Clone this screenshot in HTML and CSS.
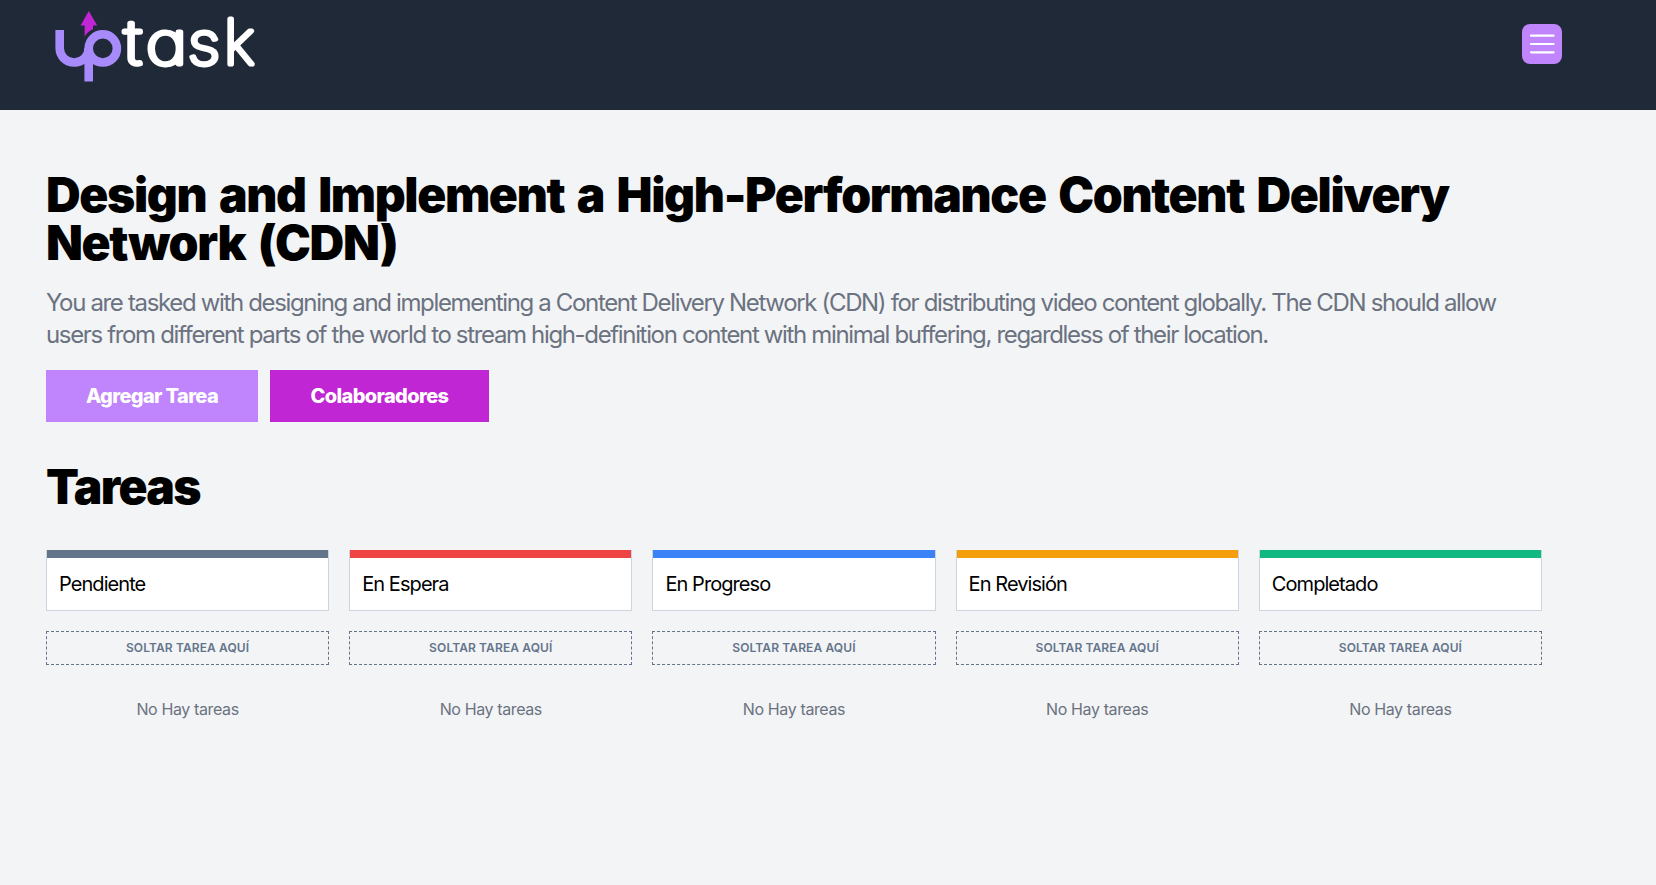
FILE: index.html
```html
<!DOCTYPE html>
<html lang="es">
<head>
<meta charset="utf-8">
<title>UpTask</title>
<link rel="stylesheet" href="styles.css">
</head>
<body>
<header class="header">
  <svg class="logo" width="210" height="90" viewBox="50 0 210 90" role="img" aria-label="uptask">
    <g fill="none" stroke="#a78bfa" stroke-width="8.6">
      <path d="M59.7 30V48.3A14.5 14.2 0 0 0 88.7 48.3"/>
      <circle cx="102.8" cy="48.4" r="14.1"/>
      <path d="M88.7 48V81.5"/>
    </g>
    <path fill="#c026d3" d="M88.8 11L97.2 25.500H93V29.200Q87.500 31.500 84.600 36.500V25.500H80.500Z"/>
    <g class="logo-text">
      <text transform="translate(124.200 64) scale(1.240 1.040)">t</text>
      <text transform="translate(146 64) scale(1.230 1)">a</text>
      <text transform="translate(187.800 64) scale(1.140 1)">s</text>
      <text transform="translate(224 64) scale(1.080 1.060)">k</text>
    </g>
  </svg>
  <button class="menu-button" aria-label="Menú">
    <svg width="32" height="32" viewBox="0 0 24 24" fill="none" stroke="#fff" stroke-width="1.6" stroke-linecap="round"><path d="M3.750 5.750h17M3.750 12h17M3.750 18.250h17"/></svg>
  </button>
</header>
<main class="main">
  <h1 class="title">Design and Implement a High-Performance Content Delivery Network (CDN)</h1>
  <p class="description">You are tasked with designing and implementing a Content Delivery Network (CDN) for distributing video content globally. The CDN should allow users from different parts of the world to stream high-definition content with minimal buffering, regardless of their location.</p>
  <nav class="actions">
    <a class="button button-add">Agregar Tarea</a>
    <a class="button button-team">Colaboradores</a>
  </nav>
  <h2 class="title section-title">Tareas</h2>
  <div class="board">
    <section class="column"><h3 class="status pending">Pendiente</h3><p class="drop">Soltar tarea aquí</p><p class="empty">No Hay tareas</p></section>
    <section class="column"><h3 class="status on-hold">En Espera</h3><p class="drop">Soltar tarea aquí</p><p class="empty">No Hay tareas</p></section>
    <section class="column"><h3 class="status in-progress">En Progreso</h3><p class="drop">Soltar tarea aquí</p><p class="empty">No Hay tareas</p></section>
    <section class="column"><h3 class="status under-review">En Revisión</h3><p class="drop">Soltar tarea aquí</p><p class="empty">No Hay tareas</p></section>
    <section class="column"><h3 class="status completed">Completado</h3><p class="drop">Soltar tarea aquí</p><p class="empty">No Hay tareas</p></section>
  </div>
</main>
</body>
</html>
```
FILE: styles.css
```css
* { box-sizing: border-box; margin: 0; padding: 0; }
body { min-height: 100vh; background: #f3f4f6; color: #000; font-family: Inter, "Liberation Sans", sans-serif; font-size: 16px; line-height: 24px; }
.header { display: flex; justify-content: space-between; align-items: flex-start; height: 110px; padding: 0 94px 0 50px; background: #1f2937; }
.logo { display: block; }
.logo-text { font-family: Inter, sans-serif; font-size: 57.5px; font-weight: 100; font-feature-settings: "cv11"; fill: #fff; stroke: #fff; stroke-width: 4.8px; stroke-linejoin: round; stroke-linecap: round; }
.menu-button { display: flex; align-items: center; justify-content: center; width: 40px; height: 40px; margin-top: 24px; border: 0; border-radius: 8px; background: #c084fc; }
.main { width: 1536px; margin-left: 26px; padding: 61px 20px 0; }
.title { font-size: 48px; line-height: 48px; font-weight: 900; letter-spacing: -1.35px; word-spacing: 4.3px; }
.description { margin-top: 20px; font-size: 24px; line-height: 32px; font-weight: 400; color: #6b7280; letter-spacing: -1.345px; }
.actions { display: flex; gap: 12px; margin-top: 19px; }
.button { display: block; padding: 12px 0; color: #fff; font-size: 20px; line-height: 28px; font-weight: 800; text-align: center; letter-spacing: -0.63px; }
.button-add { width: 212px; background: #c084fc; }
.button-team { width: 219px; background: #c026d3; }
.section-title { margin: 41px 0 39px; letter-spacing: -1.65px; }
.board { display: grid; grid-template-columns: repeat(5, 1fr); gap: 20px; }
.status { height: 61px; padding: 20px 12px 0; border: 1px solid #cbd5e1; border-top: 0; background: #fff; font-size: 20px; line-height: 28px; font-weight: 400; letter-spacing: -0.93px; }
.pending { box-shadow: inset 0 8px #64748b; }
.on-hold { box-shadow: inset 0 8px #ef4444; }
.in-progress { box-shadow: inset 0 8px #3b82f6; }
.under-review { box-shadow: inset 0 8px #f59e0b; }
.completed { box-shadow: inset 0 8px #10b981; }
.drop { height: 34px; margin-top: 20px; padding: 8px; border: 1px dashed #64748b; color: #64748b; font-size: 12px; line-height: 16px; font-weight: 600; text-align: center; text-transform: uppercase; letter-spacing: 0.12px; }
.empty { margin-top: 32px; color: #6b7280; text-align: center; letter-spacing: -0.38px; }
```
